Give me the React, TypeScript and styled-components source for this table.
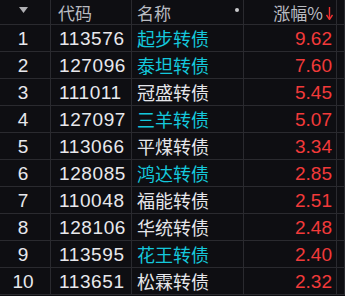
import styled, { createGlobalStyle } from "styled-components"

const GlobalStyle = createGlobalStyle`
  html, body {
    margin: 0;
    padding: 0;
    background: #0e0e12;
  }
`

const Table = styled.div`
  width: 345px;
  height: 296px;
  overflow: hidden;
  background: #0e0e12;
  font-family: "Liberation Sans", "Noto Sans CJK SC", sans-serif;
`

const Row = styled.div<{ $head?: boolean }>`
  display: grid;
  grid-template-columns: 51px 81px 112px 93px 1fr;
  height: ${p => (p.$head ? 25 : 27)}px;
  box-sizing: border-box;
  border-bottom: 1px solid #2a2a2f;
`

const Cell = styled.div<{ $align?: "left" | "center" | "right" }>`
  display: flex;
  align-items: center;
  justify-content: ${p =>
    p.$align === "right" ? "flex-end" : p.$align === "center" ? "center" : "flex-start"};
  border-right: 1px solid #2a2a2f;
  box-sizing: border-box;
  min-width: 0;
  white-space: nowrap;
  position: relative;
`

const HeadText = styled.span`
  font-family: "Noto Sans CJK SC", sans-serif;
  font-size: 17px;
  color: #b9bcc2;
  line-height: 1;
`

const Index = styled.span`
  font-size: 19px;
  color: #e8e8ec;
  padding-right: 4px;
  padding-top: 1px;
`

const Code = styled.span`
  font-size: 19px;
  color: #e8e8ec;
  padding-left: 8px;
  letter-spacing: 0.6px;
  padding-top: 1px;
`

const Name = styled.span<{ $hl: boolean }>`
  font-family: "Noto Sans CJK SC", sans-serif;
  font-size: 18px;
  color: ${p => (p.$hl ? "#14c8dc" : "#e6e6ea")};
  padding-left: 5px;
  line-height: 1;
`

const Pct = styled.span`
  font-size: 19px;
  color: #f23a3a;
  padding-right: 4px;
  padding-top: 1px;
`

const Dot = styled.span`
  position: absolute;
  right: 4px;
  top: 8px;
  width: 4px;
  height: 4px;
  border-radius: 50%;
  background: #c8c8cc;
`

const rows = [
  { code: "113576", name: "起步转债", hl: true, pct: "9.62" },
  { code: "127096", name: "泰坦转债", hl: true, pct: "7.60" },
  { code: "111011", name: "冠盛转债", hl: false, pct: "5.45" },
  { code: "127097", name: "三羊转债", hl: true, pct: "5.07" },
  { code: "113066", name: "平煤转债", hl: false, pct: "3.34" },
  { code: "128085", name: "鸿达转债", hl: true, pct: "2.85" },
  { code: "110048", name: "福能转债", hl: false, pct: "2.51" },
  { code: "128106", name: "华统转债", hl: false, pct: "2.48" },
  { code: "113595", name: "花王转债", hl: true, pct: "2.40" },
  { code: "113651", name: "松霖转债", hl: false, pct: "2.32" },
]

export default function App() {
  return (
    <>
      <GlobalStyle />
      <Table>
        <Row $head>
          <Cell $align="center">
            <svg width="9" height="6" viewBox="0 0 9 6" style={{ marginRight: 4, marginTop: -4 }}>
              <path d="M0 0 H9 L4.5 6 Z" fill="#b0b0b4" />
            </svg>
          </Cell>
          <Cell>
            <HeadText style={{ paddingLeft: 7 }}>代码</HeadText>
          </Cell>
          <Cell>
            <HeadText style={{ paddingLeft: 5 }}>名称</HeadText>
            <Dot />
          </Cell>
          <Cell $align="right">
            <HeadText>涨幅%</HeadText>
            <svg width="7" height="13" viewBox="0 0 7 13" style={{ marginLeft: 3, marginRight: 3, marginTop: 2 }}>
              <path d="M3.5 0 V12" stroke="#f03030" strokeWidth="1.4" />
              <path d="M0.5 8 L3.5 12.5 L6.5 8" stroke="#f03030" strokeWidth="1.4" fill="none" />
            </svg>
          </Cell>
          <Cell />
        </Row>
        {rows.map((r, i) => (
          <Row key={r.code}>
            <Cell $align="center">
              <Index>{i + 1}</Index>
            </Cell>
            <Cell>
              <Code>{r.code}</Code>
            </Cell>
            <Cell>
              <Name $hl={r.hl}>{r.name}</Name>
            </Cell>
            <Cell $align="right">
              <Pct>{r.pct}</Pct>
            </Cell>
            <Cell />
          </Row>
        ))}
      </Table>
    </>
  )
}
